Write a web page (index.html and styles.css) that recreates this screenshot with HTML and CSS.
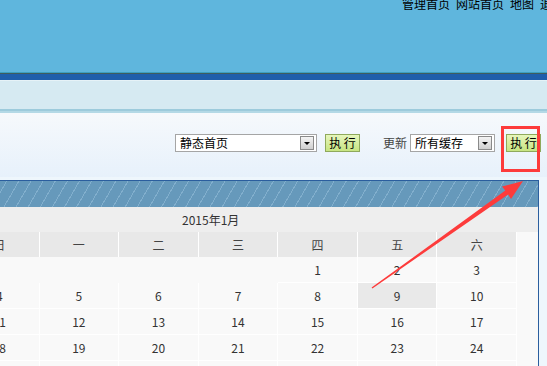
FILE: index.html
```html
<!DOCTYPE html>
<html lang="zh-CN">
<head>
    <meta charset="UTF-8">
    <title>更新缓存</title>
    <link rel="stylesheet" href="styles.css">
</head>
<body>
    <header class="top">
        <nav class="top-links">
            <a href="#">管理首页</a>
            <a href="#">网站首页</a>
            <a href="#">地图</a>
            <a href="#">退出</a>
        </nav>
    </header>
    <div class="top-line"></div>
    <div class="top-blue"></div>
    <div class="sub-bar"></div>
    <div class="sub-line"></div>

    <section class="toolbar">
        <div class="select select-wide">
            <span class="select-val">静态首页</span>
            <span class="select-arrow"></span>
        </div>
        <button class="btn-run">执 行</button>
        <span class="label">更新</span>
        <div class="select select-narrow">
            <span class="select-val">所有缓存</span>
            <span class="select-arrow"></span>
        </div>
        <button class="btn-run btn-last">执 行</button>
    </section>

    <section class="calendar">
        <div class="cal-stripe"></div>
        <div class="cal-month">2015年1月</div>
        <div class="cal-grid" id="calGrid">
            <div class="wd">日</div>
            <div class="wd">一</div>
            <div class="wd">二</div>
            <div class="wd">三</div>
            <div class="wd">四</div>
            <div class="wd">五</div>
            <div class="wd">六</div>
        </div>
    </section>

    <div class="mark-box"></div>
    <svg class="mark-arrow" width="547" height="366" viewBox="0 0 547 366">
        <polygon points="523,181 502,186.5 505.3,190.6 371.6,287.6 372.4,288.4 508.1,194.6 511,199" fill="#fd3b3b"/>
    </svg>

    <script>
        // January 2015 starts on a Thursday
        const grid = document.getElementById('calGrid');
        const firstDay = 4;
        for (let i = 0; i < firstDay; i++) {
            const empty = document.createElement('div');
            empty.className = 'day empty';
            grid.appendChild(empty);
        }
        for (let d = 1; d <= 31; d++) {
            const cell = document.createElement('div');
            cell.className = d === 9 ? 'day today' : 'day';
            cell.textContent = d;
            grid.appendChild(cell);
        }
    </script>
</body>
</html>
```

FILE: styles.css
```css
html, body {
    margin: 0;
    padding: 0;
    overflow: hidden;
}

body {
    background-color: #eef6fc;
    font-family: "SimSun", "Noto Sans CJK SC", sans-serif;
    font-size: 12px;
    color: #000;
    position: relative;
    width: 547px;
    height: 366px;
}

.top {
    height: 72px;
    background-color: #5fb6dd;
    overflow: hidden;
}

.top-links {
    display: flex;
    gap: 6px;
    padding-left: 402px;
    margin-top: -2px;
    line-height: 12px;
    white-space: nowrap;
}

.top-links a {
    color: #000;
    text-decoration: none;
}

.top-line {
    height: 1px;
    background-color: #3d9fc0;
    border-bottom: 1px solid #3e5c5f;
}

.top-blue {
    height: 6px;
    background-color: #1f5eab;
    border-bottom: 1px solid #e6f2f7;
}

.sub-bar {
    height: 28px;
    background-color: #d6eaf2;
}

.sub-line {
    height: 2px;
    background-color: #9dcbdc;
    border-bottom: 2px solid #b4d9e6;
}

.toolbar {
    display: flex;
    align-items: flex-start;
    height: 64px;
    box-sizing: border-box;
    padding: 21px 0 0 175px;
    background: linear-gradient(#f6f9fc, #e7f1fb);
    margin-bottom: 3px;
}

.select {
    display: flex;
    align-items: center;
    justify-content: space-between;
    height: 18px;
    box-sizing: border-box;
    border: 1px solid #a5a5a5;
    background-color: #fff;
    padding: 0 2px 0 4px;
}

.select-wide {
    width: 142px;
}

.select-narrow {
    width: 85px;
}

.select-val {
    line-height: 16px;
    white-space: nowrap;
}

.select-arrow {
    position: relative;
    width: 14px;
    height: 14px;
    box-sizing: border-box;
    border: 1px solid #8a8a8a;
    background: linear-gradient(#f4f4f4, #cfcfcf);
}

.select-arrow::after {
    content: "";
    position: absolute;
    left: 3px;
    top: 5px;
    border-left: 3px solid transparent;
    border-right: 3px solid transparent;
    border-top: 3px solid #000;
}

.btn-run {
    width: 35px;
    height: 18px;
    margin-left: 8px;
    padding: 0;
    border: 1px solid #8fa95c;
    background: linear-gradient(#e6f6bc, #c7e582);
    font-family: "SimSun", "Noto Sans CJK SC", sans-serif;
    font-size: 12px;
    line-height: 16px;
    color: #000;
}

.btn-last {
    margin-left: 11px;
}

.label {
    margin-left: 23px;
    margin-right: 3px;
    line-height: 18px;
    color: #444;
}

.calendar {
    margin-left: -41px;
    width: 578px;
    border: 1px solid #2b5e9e;
    background-color: #f9f9f9;
}

.cal-stripe {
    height: 26px;
    background: repeating-linear-gradient(120deg, #6699bb 0 8.5px, #82afcd 8.5px 9.5px, #6699bb 9.5px 10.5px);
}

.cal-month {
    height: 25px;
    line-height: 25px;
    padding-left: 222px;
    background-color: #eeeeee;
    color: #333;
}

.cal-grid {
    display: grid;
    grid-template-columns: repeat(7, 1fr);
    width: 557px;
    text-align: center;
    color: #333;
}

.wd {
    height: 25px;
    line-height: 25px;
    background-color: #e8e8e8;
    border-right: 1px solid #fff;
    color: #444;
}

.day {
    height: 25px;
    line-height: 25px;
    border-right: 1px solid #fff;
    border-bottom: 1px solid #fff;
}

.day.empty {
    border-color: transparent;
}

.day.today {
    background-color: #e9e9e9;
}

.mark-box {
    position: absolute;
    left: 501px;
    top: 126px;
    width: 33px;
    height: 40px;
    border: 3px solid #fd3b3b;
}

.mark-arrow {
    position: absolute;
    left: 0;
    top: 0;
}
```
